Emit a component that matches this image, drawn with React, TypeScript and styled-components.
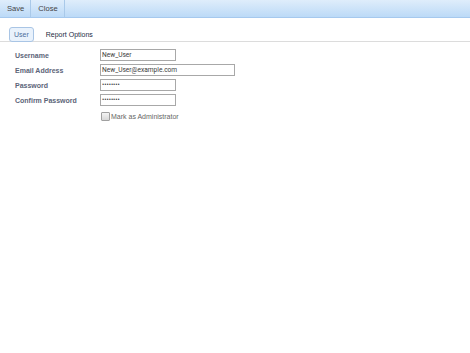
import * as React from 'react';
import styled, { createGlobalStyle } from 'styled-components';

const GlobalStyle = createGlobalStyle`
  html, body {
    margin: 0;
    padding: 0;
    background: #fff;
    font-family: 'Liberation Sans', Arial, sans-serif;
    font-size: 7px;
  }
`;

const Toolbar = styled.div`
  display: flex;
  height: 17px;
  background: linear-gradient(to bottom, #dfedfb 0%, #bcdaf7 100%);
  border-bottom: 1px solid #a6c9ee;
`;

const ToolButton = styled.div`
  display: flex;
  align-items: center;
  padding: 0 6px 0 7px;
  color: #444;
  font-size: 7.6px;
  border-right: 1px solid #a9c9e9;
`;

const TabBar = styled.div`
  display: flex;
  align-items: flex-end;
  margin-top: 8px;
  padding-left: 9px;
  height: 15px;
  border-bottom: 1px solid #dcdcdc;
`;

const Tab = styled.div<{ active?: boolean }>`
  display: flex;
  align-items: center;
  box-sizing: border-box;
  height: 15px;
  margin-bottom: -1px;
  padding: 0 ${(p) => (p.active ? '4px' : '11px')};
  color: ${(p) => (p.active ? '#4d6e9c' : '#1e2c45')};
  background: ${(p) => (p.active ? '#e9f2fc' : 'transparent')};
  border: 1px solid ${(p) => (p.active ? '#a9c5e5' : 'transparent')};
  border-radius: 3px;
`;

const Form = styled.div`
  display: grid;
  grid-template-columns: 85px auto;
  row-gap: 3px;
  padding: 7px 0 0 15px;
  align-items: center;
`;

const Label = styled.label`
  font-weight: bold;
  color: #5c6478;
  font-size: 7px;
`;

const Input = styled.input<{ wide?: boolean }>`
  box-sizing: border-box;
  width: ${(p) => (p.wide ? '135px' : '76px')};
  height: 12px;
  margin: 0;
  padding: 0 1px;
  border: 1px solid #a8a8a8;
  font-family: Roboto, 'Liberation Sans', Arial, sans-serif;
  font-size: 6.6px;
  line-height: 10px;
  color: #3a3a3a;
  outline: none;
`;

const CheckRow = styled.div`
  grid-column: 2;
  display: flex;
  align-items: center;
  gap: 1px;
  margin-top: 3px;
  padding-left: 1px;
  color: #666;
  font-size: 7px;
`;

const Box = styled.span`
  display: inline-block;
  box-sizing: border-box;
  width: 9px;
  height: 9px;
  border: 1px solid #a0a0a0;
  border-radius: 1px;
  background: linear-gradient(to bottom, #f4f4f4, #d8d8d8);
`;

export default function App() {
  return (
    <>
      <GlobalStyle />
      <Toolbar>
        <ToolButton>Save</ToolButton>
        <ToolButton>Close</ToolButton>
      </Toolbar>
      <TabBar>
        <Tab active>User</Tab>
        <Tab>Report Options</Tab>
      </TabBar>
      <Form>
        <Label>Username</Label>
        <Input defaultValue="New_User" />
        <Label>Email Address</Label>
        <Input wide defaultValue="New_User@example.com" />
        <Label>Password</Label>
        <Input type="password" defaultValue="password" />
        <Label>Confirm Password</Label>
        <Input type="password" defaultValue="password" />
        <CheckRow>
          <Box />
          Mark as Administrator
        </CheckRow>
      </Form>
    </>
  );
}
